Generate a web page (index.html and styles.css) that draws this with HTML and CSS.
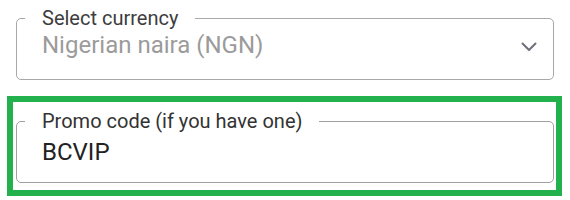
FILE: index.html
```html
<!DOCTYPE html>
<html lang="en">
<head>
  <meta charset="UTF-8">
  <title>Checkout fields</title>
  <link rel="stylesheet" href="styles.css">
</head>
<body>
  <div class="form">
    <fieldset class="field field-select">
      <legend>Select currency</legend>
      <div class="field-row">
        <span class="field-value placeholder">Nigerian naira (NGN)</span>
        <svg class="chevron" width="16" height="10" viewBox="0 0 16 10">
          <path d="M1.5 1.5 L8 8 L14.5 1.5" fill="none" stroke="#6f6f7b" stroke-width="2" stroke-linecap="round" stroke-linejoin="round"/>
        </svg>
      </div>
    </fieldset>

    <div class="promo-highlight">
      <fieldset class="field field-promo">
        <legend>Promo code (if you have one)</legend>
        <div class="field-row">
          <span class="field-value">BCVIP</span>
        </div>
      </fieldset>
    </div>
  </div>
</body>
</html>
```

FILE: styles.css
```css
* {
  margin: 0;
  padding: 0;
  box-sizing: border-box;
}

body {
  font-family: Roboto, "Liberation Sans", sans-serif;
  background: #fff;
  color: #222;
  padding-top: 6px;
}

.form {
  width: 538px;
  margin-left: 16px;
}

.field {
  border: 1px solid #a8a8a8;
  border-radius: 5px;
  padding: 0 16px 0 8px;
  min-width: 0;
}

.field legend {
  font-size: 20px;
  line-height: 24px;
  padding: 0 17px;
  color: #3d3d3d;
}

.field-row {
  display: flex;
  align-items: center;
  justify-content: space-between;
}

.field-value {
  font-size: 24px;
  line-height: 28px;
  padding-left: 17px;
  color: #222;
}

.field-value.placeholder {
  color: #9b9b9b;
}

.field-select .field-row {
  padding: 1px 0 20px;
}

.chevron {
  margin-top: 3px;
}

.promo-highlight {
  border: 6px solid #22b14c;
  margin: 16px -8px 0 -9px;
  padding: 7px 2px 7px 3px;
}

.field-promo {
  border-color: #a0a0a0;
}

.field-promo legend {
  color: #333;
}

.field-promo .field-row {
  padding: 5px 0 16px;
}
```
